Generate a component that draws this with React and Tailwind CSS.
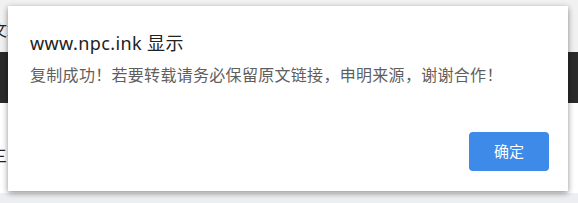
import React from "react"

const font = { fontFamily: '"Noto Sans", "Noto Sans CJK SC", sans-serif' }

const Backdrop = () => (
  <div className="flex flex-col w-full h-full">
    <div className="h-[52px] bg-[#f1f1f1] flex items-center overflow-hidden">
      <span className="ml-[-9px] text-[16px] text-[#222] mt-[8px]">文章</span>
    </div>
    <div className="h-[51px] bg-[#2b2b2b]" />
    <div className="flex-1 bg-white flex items-start overflow-hidden">
      <span className="ml-[-9px] mt-[41px] text-[16px] text-[#222]">三</span>
    </div>
    <div className="h-[10px] bg-[#eceff1]" />
  </div>
)

const Alert = () => (
  <div className="absolute left-[8px] top-[6px] w-[560px] h-[185px] bg-white shadow-[0_2px_6px_rgba(0,0,0,0.45)] flex flex-col pl-[22px] pr-[19px] pt-[23px] pb-[20px]">
    <div className="text-[18px] leading-[28px] tracking-[0.4px] text-[#222]">www.npc.ink 显示</div>
    <div className="mt-[7px] text-[16px] leading-[22px] tracking-[0.3px] text-[#5f5f5f]">
      复制成功！若要转载请务必保留原文链接，申明来源，谢谢合作！
    </div>
    <div className="flex-1 flex items-end justify-end">
      <button className="w-[80px] h-[39px] rounded-[4px] bg-[#3d8ae8] text-white text-[15px]">
        确定
      </button>
    </div>
  </div>
)

export default function App() {
  return (
    <div className="relative w-[578px] h-[203px] overflow-hidden" style={ font }>
      <Backdrop />
      <Alert />
    </div>
  )
}
